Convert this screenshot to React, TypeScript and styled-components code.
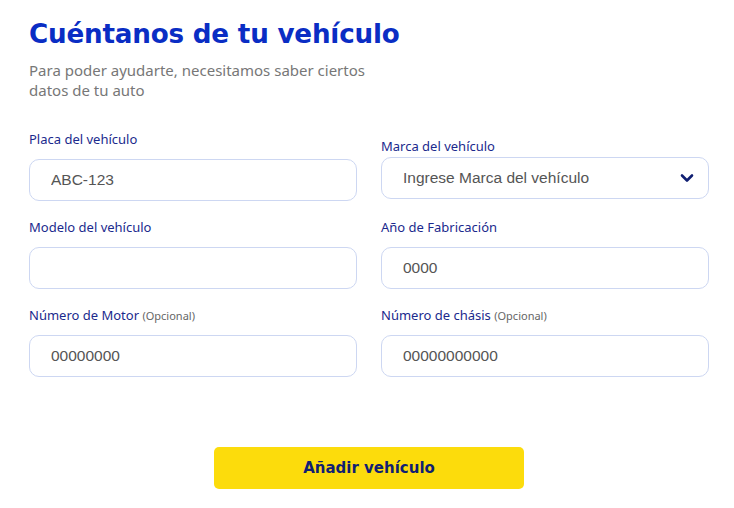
import React from 'react';
import styled, { createGlobalStyle } from 'styled-components';

const GlobalStyle = createGlobalStyle`
  body {
    margin: 0;
    background: #ffffff;
    font-family: 'DejaVu Sans', 'Noto Sans', sans-serif;
  }
`;

const Page = styled.main`
  width: 734px;
  height: 508px;
  box-sizing: border-box;
  padding: 15px 25px 0 29px;
  display: flex;
  flex-direction: column;
`;

const Title = styled.h1`
  margin: 0;
  font-family: 'DejaVu Sans', sans-serif;
  font-weight: 700;
  font-size: 26.2px;
  line-height: 38px;
  letter-spacing: -0.2px;
  color: #0a2dc4;
`;

const Subtitle = styled.p`
  margin: 7px 0 0;
  max-width: 350px;
  font-family: 'Noto Sans', sans-serif;
  font-size: 15px;
  line-height: 20px;
  color: #777777;
`;

const FormGrid = styled.div`
  margin-top: 30px;
  display: grid;
  grid-template-columns: 328px 328px;
  column-gap: 24px;
  row-gap: 17px;
  align-items: start;
`;

const Field = styled.div<{ $offset?: number; $gap?: number }>`
  display: flex;
  flex-direction: column;
  gap: ${(p) => p.$gap ?? 11}px;
  padding-top: ${(p) => p.$offset ?? 0}px;
`;

const Label = styled.label`
  display: block;
  height: 18px;
  font-family: 'Noto Sans', sans-serif;
  font-size: 13px;
  line-height: 18px;
  color: #1b2a8d;
`;

const Optional = styled.span`
  font-size: 11px;
  line-height: 1;
  color: #666;
`;

const Input = styled.input`
  box-sizing: border-box;
  width: 100%;
  height: 42px;
  padding: 0 21px;
  border: 1.5px solid #cdd7f2;
  border-radius: 10px;
  background: #fff;
  font-family: 'Liberation Sans', Arial, sans-serif;
  font-size: 15.5px;
  color: #555;
  outline: none;

  &::placeholder {
    color: #555;
  }
`;

const SelectBox = styled.div`
  box-sizing: border-box;
  height: 42px;
  padding: 0 14px 0 21px;
  border: 1.5px solid #cdd7f2;
  border-radius: 10px;
  display: flex;
  align-items: center;
  justify-content: space-between;
  font-family: 'Liberation Sans', Arial, sans-serif;
  font-size: 15.5px;
  color: #555;
`;

const Actions = styled.div`
  margin-top: 70px;
  display: flex;
  justify-content: center;
`;

const SubmitButton = styled.button`
  width: 310px;
  height: 42px;
  border: none;
  border-radius: 5px;
  background: #fcdc0c;
  font-family: 'DejaVu Sans', sans-serif;
  font-weight: 700;
  font-size: 15px;
  color: #101f72;
  cursor: pointer;
`;

function Chevron() {
  return (
    <svg width="14" height="10" viewBox="0 0 14 10" fill="none">
      <path d="M2 2.5 7 7.5 12 2.5" stroke="#101f72" strokeWidth="2.6" strokeLinecap="round" strokeLinejoin="round" />
    </svg>
  );
}

export default function App() {
  return (
    <>
      <GlobalStyle />
      <Page>
        <Title>Cuéntanos de tu vehículo</Title>
        <Subtitle>Para poder ayudarte, necesitamos saber ciertos datos de tu auto</Subtitle>
        <FormGrid>
          <Field>
            <Label htmlFor="placa">Placa del vehículo</Label>
            <Input id="placa" placeholder="ABC-123" />
          </Field>
          <Field $offset={7} $gap={2}>
            <Label>Marca del vehículo</Label>
            <SelectBox>
              <span>Ingrese Marca del vehículo</span>
              <Chevron />
            </SelectBox>
          </Field>
          <Field>
            <Label htmlFor="modelo">Modelo del vehículo</Label>
            <Input id="modelo" />
          </Field>
          <Field>
            <Label htmlFor="anio">Año de Fabricación</Label>
            <Input id="anio" placeholder="0000" />
          </Field>
          <Field>
            <Label htmlFor="motor">
              Número de Motor <Optional>(Opcional)</Optional>
            </Label>
            <Input id="motor" placeholder="00000000" />
          </Field>
          <Field>
            <Label htmlFor="chasis">
              Número de chásis <Optional>(Opcional)</Optional>
            </Label>
            <Input id="chasis" placeholder="00000000000" />
          </Field>
        </FormGrid>
        <Actions>
          <SubmitButton>Añadir vehículo</SubmitButton>
        </Actions>
      </Page>
    </>
  );
}
